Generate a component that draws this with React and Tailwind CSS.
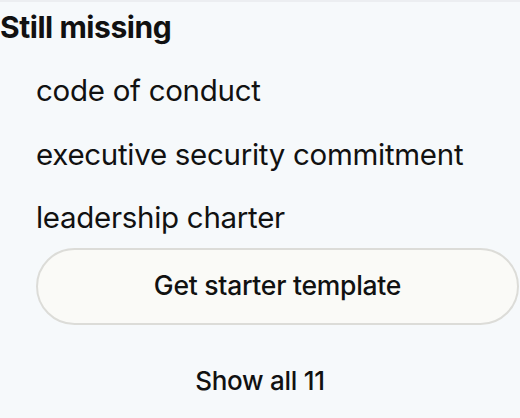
export default function App() {
  return (
    <div className="w-[520px] h-[418px] overflow-hidden bg-[#f6f9fb] border-t-2 border-[#eceef1] text-[#111111]" style={{ fontFamily: 'Inter, "Noto Sans", sans-serif' }}>
      <div className="pt-[5px]">
        <h2 className="text-[30px] font-bold leading-[40px] tracking-[-0.015em]">Still missing</h2>
        <ul className="pl-[36px] mt-[12px] flex flex-col">
          <li className="text-[29.5px] leading-[63.5px] tracking-[-0.01em]">code of conduct</li>
          <li className="text-[29.5px] leading-[63.5px] tracking-[-0.01em]">executive security commitment</li>
          <li className="text-[29.5px] leading-[63.5px] tracking-[-0.01em]">leadership charter</li>
        </ul>
        <div className="pl-[36px] pr-[1px] mt-[-2px]">
          <button className="w-full h-[77px] rounded-full bg-[#fafaf7] border-2 border-[#dcdcd8] text-[26.5px] font-medium tracking-[-0.01em]">Get starter template</button>
        </div>
        <div className="flex justify-center mt-[26px]">
          <button className="text-[26px] font-medium leading-[60px] tracking-[-0.01em]">Show all 11</button>
        </div>
      </div>
    </div>
  );
}
